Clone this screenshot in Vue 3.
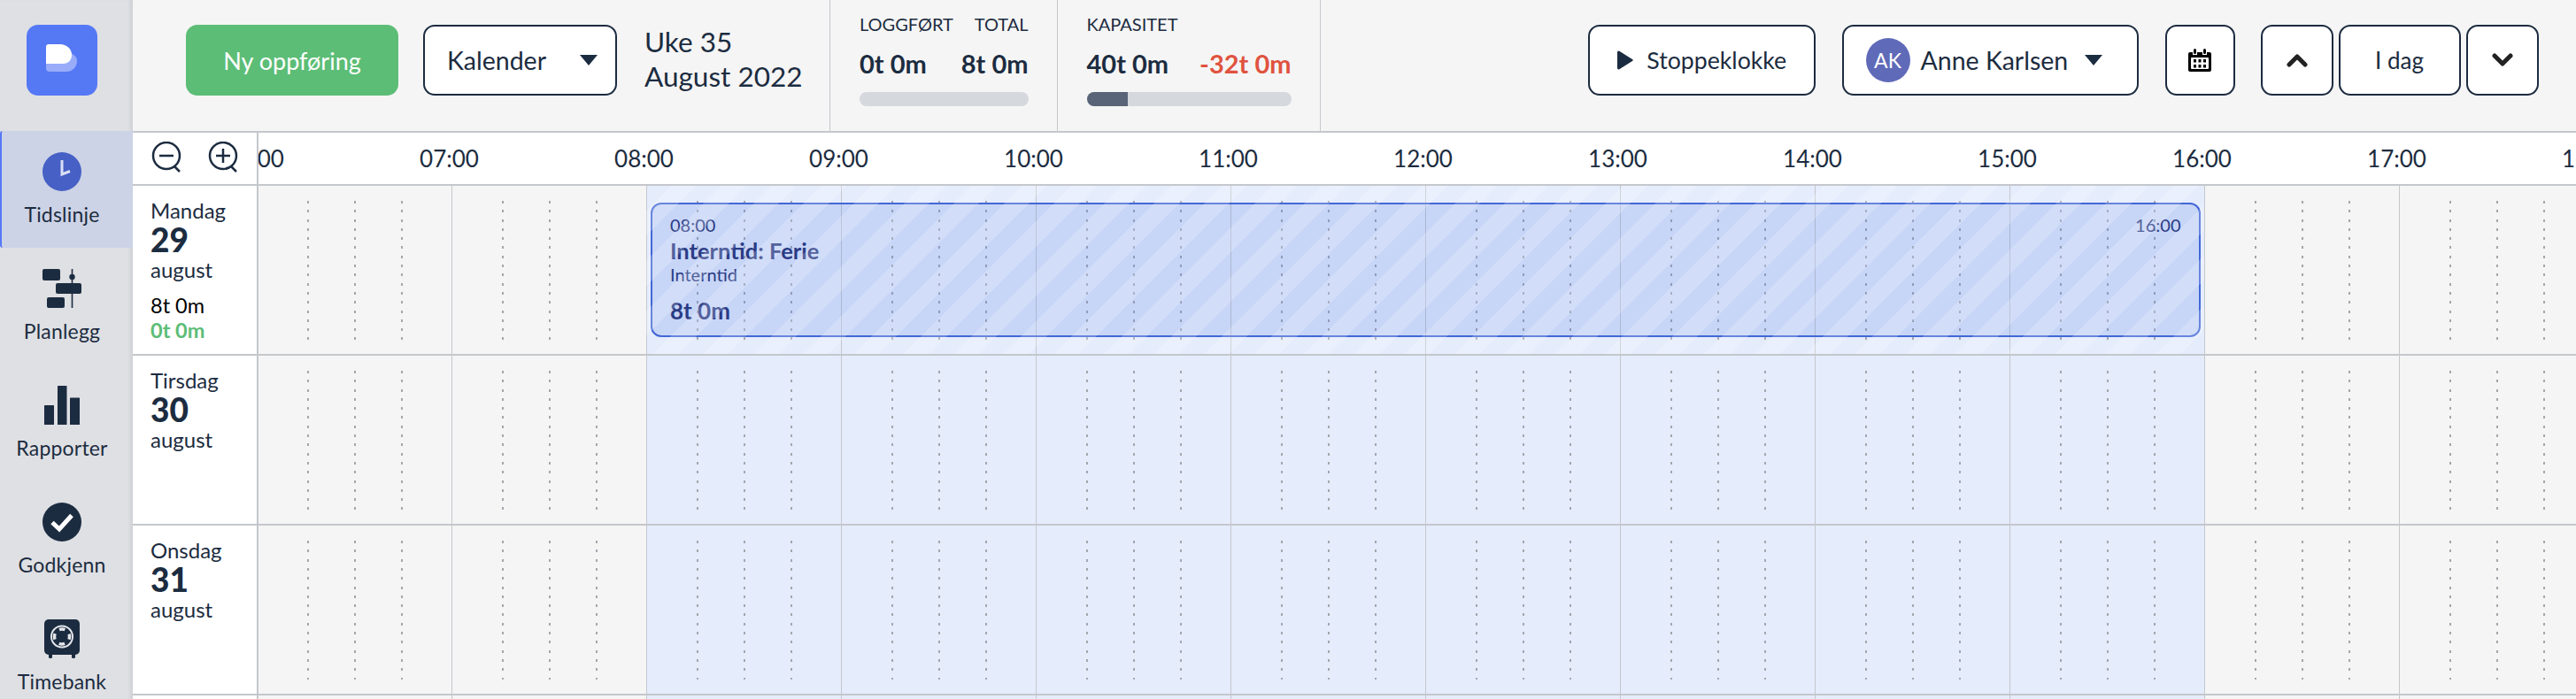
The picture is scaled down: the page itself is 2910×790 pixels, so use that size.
<script setup>
const hours = ['06:00','07:00','08:00','09:00','10:00','11:00','12:00','13:00','14:00','15:00','16:00','17:00','18:00']
const days = [
  { name: 'Mandag', num: '29', logged: '8t 0m', diff: '0t 0m', event: true },
  { name: 'Tirsdag', num: '30' },
  { name: 'Onsdag', num: '31' },
  { name: '', num: '' },
]
const isWork = (i) => i >= 2 && i < 10
</script>

<template>
  <div class="app">
    <aside class="side">
      <div class="logo-wrap">
        <div class="logo">
          <svg width="40" height="40" viewBox="0 0 40 40">
            <path d="M1 12H27a9 9 0 0 1 9 9v0a12 12 0 0 1-12 12H5a4 4 0 0 1-4-4Z" fill="#98acf9"/>
            <path d="M1 5a3 3 0 0 1 3-3H17a13 12 0 0 1 13 12v1a9 9 0 0 1-9 9H1Z" fill="#fff"/>
          </svg>
        </div>
      </div>
      <nav class="nav">
        <a class="item active">
          <svg class="ic" viewBox="0 0 44 44"><circle cx="22" cy="22" r="22" fill="#4660c5"/><path d="M22 9v16l9-3.5" fill="none" stroke="#d9dff5" stroke-width="3"/></svg>
          <span>Tidslinje</span>
        </a>
        <a class="item">
          <svg class="ic" viewBox="0 0 44 44" fill="#1c2c40"><rect x="0" y="0" width="20" height="13" rx="2"/><rect x="15" y="16" width="29" height="12" rx="2"/><rect x="5" y="32" width="20" height="12" rx="2"/><rect x="32.7" y="0" width="1.6" height="44"/><circle cx="33.5" cy="9" r="3.2"/></svg>
          <span>Planlegg</span>
        </a>
        <a class="item">
          <svg class="ic" viewBox="0 0 44 44" fill="#1c2c40"><rect x="2" y="22" width="11" height="22" rx=".5"/><rect x="17" y="0" width="10.5" height="44" rx=".5"/><rect x="31" y="13.500" width="11" height="30.500" rx=".5"/></svg>
          <span>Rapporter</span>
        </a>
        <a class="item">
          <svg class="ic" viewBox="0 0 44 44"><circle cx="22" cy="22" r="22" fill="#1c2c40"/><path d="M11 22.500l8 7.500L33 14.500" fill="none" stroke="#fff" stroke-width="5"/></svg>
          <span>Godkjenn</span>
        </a>
        <a class="item">
          <svg class="ic" viewBox="0 0 44 44">
            <rect x="2" y="0" width="40" height="40" rx="5" fill="#1c2c40"/>
            <rect x="7" y="38" width="4" height="6" rx="1.500" fill="#1c2c40"/>
            <rect x="33" y="38" width="4" height="6" rx="1.500" fill="#1c2c40"/>
            <circle cx="22" cy="19.500" r="12" fill="none" stroke="#e4e6ea" stroke-width="2"/>
            <circle cx="22" cy="19.500" r="8.500" fill="none" stroke="#e4e6ea" stroke-width="3.500" stroke-dasharray="6.500 6.850" stroke-dashoffset="3.250"/>
          </svg>
          <span>Timebank</span>
        </a>
      </nav>
    </aside>

    <main class="main">
      <header class="top">
        <button class="btn new">Ny oppføring</button>
        <button class="btn kal"><span>Kalender</span><i class="tri"></i></button>
        <div class="week"><div>Uke 35</div><div>August 2022</div></div>
        <section class="stat s1">
          <div class="cols lab"><span>LOGGFØRT</span><span>TOTAL</span></div>
          <div class="cols val"><span>0t 0m</span><span>8t 0m</span></div>
          <div class="bar"></div>
        </section>
        <section class="stat s2">
          <div class="lab">KAPASITET</div>
          <div class="cols val"><span>40t 0m</span><span class="neg">-32t 0m</span></div>
          <div class="bar"><div class="fill"></div></div>
        </section>
        <div class="tools">
          <button class="btn stop">
            <svg width="19" height="22" viewBox="0 0 19 22"><path d="M1 2a1.500 1.500 0 0 1 2.300-1.200L18 10a1.200 1.200 0 0 1 0 2L3.300 21.200A1.500 1.500 0 0 1 1 20Z" fill="#1c2c40"/></svg>
            <span>Stoppeklokke</span>
          </button>
          <button class="btn user">
            <span class="ava">AK</span><span class="uname">Anne Karlsen</span><i class="tri"></i>
          </button>
          <button class="btn cal">
            <svg width="26" height="26" viewBox="0 0 26 26">
              <path d="M2 4h3v3h5V4h6v3h5V4h3a2 2 0 0 1 2 2v18a2 2 0 0 1-2 2H2a2 2 0 0 1-2-2V6a2 2 0 0 1 2-2Z" fill="#000"/>
              <rect x="6" y="0" width="3" height="6" rx="1.500" fill="#000"/><rect x="17" y="0" width="3" height="6" rx="1.500" fill="#000"/>
              <rect x="3" y="10" width="20" height="13" rx="1" fill="#fff"/>
              <g fill="#000"><rect x="6" y="12" width="3" height="3.500"/><rect x="11.500" y="12" width="3" height="3.500"/><rect x="17" y="12" width="3" height="3.500"/><rect x="6" y="18" width="3" height="3.500"/><rect x="11.500" y="18" width="3" height="3.500"/><rect x="17" y="18" width="3" height="3.500"/></g>
            </svg>
          </button>
          <button class="btn up">
            <svg width="24" height="16" viewBox="0 0 24 16"><path d="M3 13l9-9 9 9" fill="none" stroke="#222" stroke-width="5" stroke-linecap="round" stroke-linejoin="round"/></svg>
          </button>
          <button class="btn today">I dag</button>
          <button class="btn down">
            <svg width="24" height="16" viewBox="0 0 24 16"><path d="M3 3l9 9 9-9" fill="none" stroke="#222" stroke-width="5" stroke-linecap="round" stroke-linejoin="round"/></svg>
          </button>
        </div>
      </header>

      <div class="head">
        <div class="zoom">
          <svg width="36" height="36" viewBox="0 0 36 36"><g fill="none" stroke="#1c2c40" stroke-width="2.500"><circle cx="17" cy="16" r="15"/><path d="M9 16h16M26 28l6 6"/></g></svg>
          <svg width="36" height="36" viewBox="0 0 36 36"><g fill="none" stroke="#1c2c40" stroke-width="2.500"><circle cx="17" cy="16" r="15"/><path d="M9 16h16M17 8v16M26 28l6 6"/></g></svg>
        </div>
        <div class="labels"><div class="labels-in"><div v-for="h in hours" :key="h" class="lbl">{{ h }}</div></div></div>
      </div>

      <div v-for="(d, ri) in days" :key="ri" class="row">
        <div class="day">
          <template v-if="d.name">
            <div class="dn">{{ d.name }}</div>
            <div class="dnum">{{ d.num }}</div>
            <div class="dn mon">august</div>
            <div v-if="d.logged" class="logged">{{ d.logged }}</div>
            <div v-if="d.diff" class="diff">{{ d.diff }}</div>
          </template>
        </div>
        <div class="track">
          <div class="cells">
            <div v-for="(h, i) in hours" :key="h" class="cell" :class="{ work: isWork(i) }">
              <i class="dots"></i><i class="dots"></i><i class="dots"></i>
            </div>
          </div>
          <div v-if="d.event" class="event">
            <div class="ev-top"><span>08:00</span><span>16:00</span></div>
            <div class="ev-title">Interntid: Ferie</div>
            <div class="ev-sub">Interntid</div>
            <div class="ev-dur">8t 0m</div>
          </div>
          <div v-if="d.event" class="stripes"></div>
        </div>
      </div>
    </main>
  </div>
</template>

<style>
html, body { margin: 0; overflow: hidden; background: #f5f5f5; }
</style>

<style scoped>
.app { display: flex; width: 2910px; height: 790px; overflow: hidden; font-family: Lato, "Open Sans", sans-serif; color: #1c2c40; }
.side { flex: 0 0 150px; background: #dfe0e4; box-shadow: inset -5px 0 5px -3px rgba(30,40,60,.1); }
.logo-wrap { height: 148px; box-sizing: border-box; padding: 28px 0 0 30px; }
.logo { width: 80px; height: 80px; border-radius: 13px; background: #5578f5; display: flex; padding: 20px 0 0 21px; box-sizing: border-box; }
.item { height: 132px; box-sizing: border-box; padding: 24px 10px 0 0; display: flex; flex-direction: column; align-items: center; font-size: 23px; line-height: 28px; letter-spacing: .2px; }
.item.active { background: #cdd3e6; border-left: 2px solid #5578f5; border-radius: 3px 0 0 3px; padding-right: 12px; }
.ic { width: 44px; height: 44px; margin-bottom: 12px; flex: none; }
.main { flex: 1; min-width: 0; display: flex; flex-direction: column; }
.top { height: 150px; box-sizing: border-box; border-bottom: 2px solid #c4c7cc; background: #f5f5f5; display: flex; align-items: flex-start; flex: none; }
.btn { height: 80px; margin-top: 28px; box-sizing: border-box; border: 2px solid #1c2c40; border-radius: 13px; background: #fff; color: #1c2c40; font: inherit; font-size: 26px; display: flex; align-items: center; justify-content: center; padding: 0; flex: none; }
.new { width: 240px; margin-left: 60px; background: #5cbd76; border: 0; color: #fff; font-size: 27px; }
.kal { width: 219px; margin-left: 28px; justify-content: space-between; padding: 0 20px 0 25px; font-size: 28.500px; }
.tri { width: 0; height: 0; border-left: 10.5px solid transparent; border-right: 10.5px solid transparent; border-top: 12px solid #1c2c40; }
.week { flex: 0 0 209px; margin-left: 31px; box-sizing: border-box; padding-top: 28px; font-size: 31.500px; line-height: 39px; }
.stat { height: 148px; box-sizing: border-box; border-left: 1.500px solid #c4c7cc; padding: 15px 0 0 33px; }
.s1 { flex: 0 0 256.500px; padding-right: 32px; }
.s2 { flex: 0 0 298px; padding-right: 32px; border-right: 1.500px solid #c4c7cc; }
.cols { display: flex; justify-content: space-between; }
.lab { font-size: 20px; line-height: 24px; }
.val { font-size: 29px; line-height: 34px; font-weight: 700; margin-top: 16px; }
.neg { color: #e0533f; }
.bar { height: 16px; border-radius: 8px; background: #d5d8dd; margin-top: 15px; overflow: hidden; }
.fill { width: 46px; height: 16px; background: #5a6478; }
.tools { display: flex; margin-left: 302px; }
.stop { width: 257.500px; gap: 15px; font-size: 26.700px; }
.user { width: 335.500px; margin-left: 29.500px; justify-content: flex-start; padding-left: 25px; }
.ava { width: 50px; height: 50px; border-radius: 50%; background: #5f6ab8; color: #fff; font-size: 23px; display: flex; align-items: center; justify-content: center; }
.uname { margin: 0 19px 0 12px; font-size: 28.500px; }
.cal { width: 79px; margin-left: 29.500px; }
.up { width: 82px; margin-left: 29px; }
.today { width: 138px; margin-left: 6px; }
.down { width: 82px; margin-left: 6px; }
.head { height: 60px; box-sizing: border-box; border-bottom: 2px solid #c4c7cc; background: #fff; display: flex; flex: none; }
.zoom { flex: 0 0 142px; box-sizing: border-box; border-right: 2px solid #c4c7cc; display: flex; gap: 28px; padding: 10px 0 0 21px; }
.labels { flex: 1; min-width: 0; overflow: hidden; }
.labels-in { display: flex; margin-left: -114.500px; }
.lbl { flex: 0 0 220px; text-align: center; font-size: 26px; line-height: 58px; }
.row { height: 192px; box-sizing: border-box; border-bottom: 2px solid #c4c7cc; display: flex; flex: none; }
.day { flex: 0 0 142px; box-sizing: border-box; border-right: 2px solid #c4c7cc; background: #fff; padding: 13px 0 0 20px; }
.dn { font-size: 24px; line-height: 30px; }
.dnum { font-size: 37px; line-height: 36px; font-weight: 900; }
.mon { margin-top: 1px; }
.logged { font-size: 23.500px; line-height: 28px; margin-top: 11px; color: #000; }
.diff { font-size: 23.500px; line-height: 28px; font-weight: 700; color: #5cbd76; }
.track { position: relative; flex: 1; min-width: 0; overflow: hidden; background: #f5f5f5; }
.cells { display: flex; height: 100%; margin-left: -2.500px; }
.cell { flex: 0 0 220px; box-sizing: border-box; border-left: 1.500px solid #c4c7cc; display: flex; gap: 51px; padding: 17px 0 0 56px; }
.work { background: #e5ecfc; }
.dots { width: 2px; height: 157px; flex: none; background: repeating-linear-gradient(to bottom, #a4a7ad 0 3px, transparent 3px 10.300px); }
.event { position: absolute; left: 443px; top: 19px; width: 1750.500px; height: 151.500px; box-sizing: border-box; border: 2px solid #4267d6; border-radius: 12px; background: rgba(66,110,225,.18); padding: 10px 20px 0 20px; color: #2a3b85; }
.ev-top { display: flex; justify-content: space-between; font-size: 20px; line-height: 26px; }
.ev-title { font-size: 25.500px; line-height: 30px; font-weight: 700; margin-top: 1px; }
.ev-sub { font-size: 20px; line-height: 24px; }
.ev-dur { font-size: 26px; line-height: 30px; font-weight: 700; margin-top: 14px; }
.stripes { position: absolute; left: 437.500px; top: 0; width: 1760px; height: 100%; pointer-events: none; background: repeating-linear-gradient(135deg, transparent 0 20px, rgba(255,255,255,.2) 20px 40px); }
</style>
